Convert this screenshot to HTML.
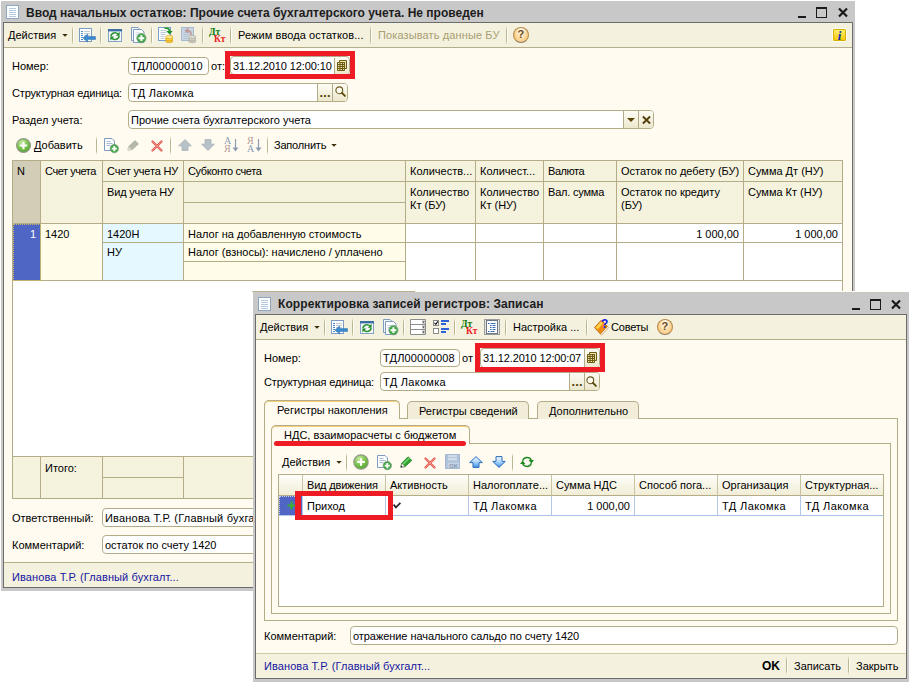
<!DOCTYPE html>
<html lang="ru">
<head>
<meta charset="utf-8">
<title>Ввод начальных остатков</title>
<style>
html,body{margin:0;padding:0;background:#fff}
body{width:909px;height:682px;position:relative;overflow:hidden;font-family:"Liberation Sans",sans-serif;font-size:11px;color:#000;line-height:13px}
.a{position:absolute;box-sizing:border-box;white-space:nowrap}
.frame{background:#c8c8c8}
.inner{background:#fffbf0;border:1px solid #6c6c6c}
.ttl{font-weight:bold;font-size:12px;color:#1c1c1c;line-height:14px}
.tb{background:#f4f1de;border-bottom:1px solid #b5ae8a}
.sep{width:2px;background:linear-gradient(rgba(190,182,142,0),#bdb58e 22%,#bdb58e 78%,rgba(190,182,142,0)) left/1px 100% no-repeat,linear-gradient(rgba(255,254,246,0),#fffef8 22%,#fffef8 78%,rgba(255,254,246,0)) right/1px 100% no-repeat}
.fld{background:#fff;border:1px solid #b3ac86;border-radius:4px;padding:2px 0 0 2px;height:18px;overflow:hidden}
.btn{background:#f6f3e0;border-left:1px solid #b3ac86;}
.th{background:#f5f2dd;border-right:1px solid #b3ac86;border-bottom:1px solid #b3ac86;padding:4px 0 0 4px;overflow:hidden;line-height:13px;white-space:normal}
.td{border-right:1px solid #b3ac86;border-bottom:1px solid #b3ac86;padding:3px 0 0 4px;overflow:hidden}
.num{text-align:right;padding:3px 4px 0 0}
.sb{background:#f4f1de}
.navy{color:#1515a2}
.gr{color:#a89e72}
.dt{font-family:"Liberation Serif",serif;font-weight:bold;font-size:9.500px;color:#0b7a0b;line-height:10px}
.kt{font-family:"Liberation Serif",serif;font-weight:bold;font-size:9.500px;color:#ee1c24;line-height:10px}
.help{width:15.500px;height:15.500px;border-radius:8px;border:1px solid #b58a4c;border-bottom-color:#8d7a66;background:radial-gradient(ellipse at 50% 22%,#fffaf0 0%,#fde6bc 38%,#f6b350 100%);font-weight:bold;font-size:11px;line-height:13.500px;text-align:center;color:#6e4a22}
.info{width:15px;height:14px;border:1px solid #fffdf2;border-radius:2px;background:linear-gradient(#fff27a,#f7c600);box-shadow:0 0 0 1px #d8b000 inset;font-family:"Liberation Serif",serif;font-style:italic;font-weight:bold;font-size:13px;line-height:13px;text-align:center;color:#1033b0}
.red{border:5px solid #ed1c24}
.dots{font-weight:bold;font-size:13px;color:#54420a;letter-spacing:.2px}
.srt{font-family:"Liberation Serif",serif;font-size:10px;line-height:10px}
.btn{background:linear-gradient(#fdfcf4,#ece8cd)}
.tabi{background:#f1edd8;border:1px solid #b3ac86;border-bottom:0;border-radius:5px 5px 0 0;padding:3px 0 0 11px}
.taba{background:#fffbf0;border:1px solid #b3ac86;border-bottom:0;border-radius:5px 5px 0 0;padding:3px 0 0 12px;box-shadow:0 1px 0 #f7cf7a inset}
.th2{background:linear-gradient(#fffefa,#f1edd6);border-right:1px solid #c9c3a3;border-bottom:1px solid #b3ac86;padding:4px 0 0 4px;overflow:hidden}
.td2{background:#fff;border-right:1px solid #b5c7e6;border-bottom:1px solid #a9c0e6;padding:4px 0 0 4px;overflow:hidden}
.td2.num{padding:4px 4px 0 0}
u{text-decoration-skip-ink:none;text-underline-offset:1.500px;text-decoration-thickness:1px}
svg{position:absolute;overflow:visible}
</style>
</head>
<body>

<!-- ================= WINDOW 1 ================= -->
<div class="a frame" style="left:1px;top:1px;width:854px;height:590px"></div>
<div class="a inner" style="left:3px;top:22px;width:850px;height:566px"></div>
<div class="a ttl" style="left:26px;top:6px">Ввод начальных остатков: Прочие счета бухгалтерского учета. Не проведен</div>

<!-- toolbar 1 -->
<div class="a tb" style="left:4px;top:23px;width:848px;height:25px"></div>
<svg style="left:6px;top:5px" width="13" height="14" viewBox="0 0 13 14"><rect x=".5" y=".5" width="12" height="13" fill="#fdfeff" stroke="#8fa5c4"/><path d="M3 3.5h7M3 5.5h7M3 7.5h7M3 9.5h7M3 11.5h7" stroke="#b7c9df" stroke-width="1"/></svg>
<div class="a" style="left:8px;top:29px">Действия</div>
<svg style="left:62px;top:34px" width="6" height="3" viewBox="0 0 6 3"><path d="M.3 0h5.400L3 2.800z" fill="#3a2c08"/></svg>
<div class="a sep" style="left:72px;top:26px;height:19px"></div>
<!-- icon: list with arrow -->
<svg style="left:79px;top:28px" width="17" height="15" viewBox="0 0 17 15"><rect x=".5" y=".5" width="12" height="13" fill="#fff" stroke="#7d9cc4"/><path d="M2 3.500h2M2 5.500h2M2 7.500h2M2 9.500h2M2 11.500h2" stroke="#4d8ac8"/><path d="M5 3.500h6M5 5.500h6M5 7.500h6M5 11.500h3" stroke="#c2ccd8"/><path d="M4 10l4.6-4v2.6H16.5v2.8H8.6V14z" fill="#3a8bd0" stroke="#2a6aa8" stroke-width=".5"/></svg>
<div class="a sep" style="left:100px;top:26px;height:19px"></div>
<!-- icon: refresh window -->
<svg style="left:108px;top:29px" width="14" height="13" viewBox="0 0 14 13"><rect x=".5" y=".5" width="13" height="12" fill="#f4f8fc" stroke="#86a3c6"/><rect x="0" y="0" width="14" height="2.4" fill="#3c6ea6"/><path d="M3 7.2a4 3.6 0 0 1 7-2.2" fill="none" stroke="#2f9632" stroke-width="1.6"/><path d="M11.6 2.8v4H7.8z" fill="#1f8a25"/><path d="M11 7a4 3.6 0 0 1-7 2.300" fill="none" stroke="#2f9632" stroke-width="1.6"/><path d="M2.400 11.400v-4H6.200z" fill="#1f8a25"/></svg>
<!-- icon: copy plus -->
<svg style="left:131px;top:27px" width="16" height="16" viewBox="0 0 16 16"><path d="M.5.5h6.500l2 2V13.500H.5z" fill="#f4f8fc" stroke="#7f9cc0"/><path d="M2.500 2.500h8l2.500 2.500V15.500H2.500z" fill="#fdfeff" stroke="#7f9cc0"/><path d="M4.500 6h5M4.500 8h4" stroke="#c5d2e0"/><circle cx="10.400" cy="11.200" r="4.600" fill="#3fa845" stroke="#7d9a7d" stroke-width=".8"/><path d="M10.400 8.300v5.800M7.500 11.200h5.800" stroke="#fff" stroke-width="2"/></svg>
<div class="a sep" style="left:151px;top:26px;height:19px"></div>
<!-- icon: post (doc + green arrow + coins) -->
<svg style="left:158px;top:27px" width="16" height="17" viewBox="0 0 16 17"><rect x=".5" y=".5" width="12" height="13" fill="#fbfdff" stroke="#78a0d0"/><path d="M2.500 3.500h6M2.500 5.500h6M2.500 7.500h5M2.500 9.500h4M2.500 11.500h4" stroke="#bccbdc"/><path d="M6.500 1.200c3.500-.5 5 .8 5 3" fill="none" stroke="#2c9a2c" stroke-width="1.800"/><path d="M8.300 4h6.400l-3.200 3.600z" fill="#1f8f22"/><ellipse cx="11.200" cy="14" rx="3.700" ry="1.700" fill="#f5c535" stroke="#d09a10" stroke-width=".6"/><ellipse cx="11.200" cy="12" rx="3.700" ry="1.700" fill="#fbd548" stroke="#d09a10" stroke-width=".6"/><ellipse cx="11.200" cy="10" rx="3.700" ry="1.700" fill="#ffea8a" stroke="#d09a10" stroke-width=".6"/></svg>
<!-- icon: unpost (gray) -->
<svg style="left:181px;top:27px" width="16" height="17" viewBox="0 0 16 17"><rect x=".5" y=".5" width="12" height="13" fill="#c9d6e3" stroke="#a9bace"/><path d="M2.500 5.500h6M2.500 7.500h5M2.500 9.500h4M2.500 11.500h4" stroke="#b4c4d6"/><path d="M9.800 8c.8-3-1-4.500-3.500-4.300" fill="none" stroke="#c29a98" stroke-width="1.800"/><path d="M7.400 .6v6.200L3.400 3.700z" fill="#c09896"/><ellipse cx="11.200" cy="14" rx="3.700" ry="1.700" fill="#c8c5ba" stroke="#a9a69b" stroke-width=".6"/><ellipse cx="11.200" cy="12" rx="3.700" ry="1.700" fill="#d2cfc4" stroke="#a9a69b" stroke-width=".6"/><ellipse cx="11.200" cy="10" rx="3.700" ry="1.700" fill="#dcd9cf" stroke="#a9a69b" stroke-width=".6"/></svg>
<div class="a sep" style="left:202px;top:26px;height:19px"></div>
<div class="a dt" style="left:209px;top:27px">Дт</div>
<div class="a kt" style="left:214px;top:34px">Кт</div>
<div class="a sep" style="left:230px;top:26px;height:19px"></div>
<div class="a" style="left:238px;top:29px;letter-spacing:.09px">Режим ввода остатков...</div>
<div class="a sep" style="left:370px;top:26px;height:19px"></div>
<div class="a gr" style="left:378px;top:29px;letter-spacing:.12px">Показывать данные БУ</div>
<div class="a sep" style="left:506px;top:26px;height:19px"></div>
<div class="a help" style="left:513px;top:27px">?</div>
<div class="a info" style="left:832px;top:28px">i</div>
<!-- window buttons 1 -->
<div class="a" style="left:798px;top:15.500px;width:8px;height:2.500px;background:#1a1a1a"></div>
<div class="a" style="left:816px;top:7px;width:11px;height:11px;border:1px solid #1a1a1a;border-top-width:2px"></div>
<svg style="left:838px;top:8px" width="10" height="9" viewBox="0 0 10 9"><path d="M1 .5l8 8M9 .5l-8 8" stroke="#1a1a1a" stroke-width="2.200"/></svg>

<!-- fields 1 -->
<div class="a" style="left:12px;top:60px">Номер:</div>
<div class="a fld" style="left:128px;top:57px;width:81px;letter-spacing:.17px">ТДЛ00000010</div>
<div class="a" style="left:211px;top:60px">от:</div>
<div class="a fld" style="left:230px;top:56px;width:120px;height:19px;padding-top:3px;letter-spacing:-.12px;padding-left:2px">31.12.2010 12:00:10</div>
<div class="a btn" style="left:334px;top:58px;width:15px;height:16px;border-radius:0 3px 3px 0"></div>
<svg style="left:337px;top:60px" width="10" height="11" viewBox="0 0 10 11"><path d="M2.500 .5h7v8h-2v2h-7v-8h2z" fill="#efe7b8" stroke="#6f5c10"/><path d="M.5 4.500h7M.5 6.500h7M.5 8.500h7M3 2.500v8M5.500 2.500v8M2.500 2.500h5v6" fill="none" stroke="#6f5c10" stroke-width="1.100"/></svg>
<div class="a red" style="left:225px;top:51px;width:130px;height:28px"></div>
<div class="a" style="left:12px;top:87px;letter-spacing:-.17px">Структурная единица:</div>
<div class="a fld" style="left:128px;top:83px;width:220px;height:19px;padding-top:3px;letter-spacing:.3px">ТД Лакомка</div>
<div class="a btn" style="left:317px;top:84px;width:15px;height:17px"></div>
<div class="a btn" style="left:332px;top:84px;width:15px;height:17px;border-radius:0 3px 3px 0"></div>
<div class="a dots" style="left:319.500px;top:86px">...</div>
<svg style="left:335px;top:86px" width="11" height="11" viewBox="0 0 11 11"><circle cx="4.300" cy="4.300" r="3.400" fill="#fffdf2" stroke="#66541a" stroke-width="1.100"/><path d="M6.900 6.900l3 3" stroke="#5c4a0c" stroke-width="1.900" stroke-linecap="round"/></svg>
<div class="a" style="left:12px;top:114px">Раздел учета:</div>
<div class="a fld" style="left:128px;top:110px;width:526px;height:19px;padding-top:3px">Прочие счета бухгалтерского учета</div>
<div class="a btn" style="left:623px;top:111px;width:15px;height:17px"></div>
<div class="a btn" style="left:638px;top:111px;width:15px;height:17px;border-radius:0 3px 3px 0"></div>
<svg style="left:627px;top:118px" width="8" height="4" viewBox="0 0 8 4"><path d="M0 0h8L4 4z" fill="#5a4408"/></svg>
<svg style="left:641.500px;top:115.500px" width="9" height="8" viewBox="0 0 9 8"><path d="M.9 .5l7.200 7M8.100 .5L.9 7.500" stroke="#54400a" stroke-width="1.900"/></svg>

<!-- table toolbar 1 -->
<svg style="left:16px;top:138px" width="15" height="15" viewBox="0 0 15 15"><defs><radialGradient id="gg" cx=".4" cy=".3" r=".8"><stop offset="0" stop-color="#cdeaa8"/><stop offset=".55" stop-color="#73c047"/><stop offset="1" stop-color="#4a9c2c"/></radialGradient></defs><circle cx="7.500" cy="7.500" r="6.900" fill="url(#gg)" stroke="#929a88" stroke-width="1.200"/><path d="M7.500 3.800v7.400M3.800 7.500h7.400" stroke="#fff" stroke-width="2"/></svg>
<div class="a" style="left:34px;top:139px"><u>Д</u>обавить</div>
<div class="a sep" style="left:96px;top:136px;height:19px"></div>
<svg style="left:104px;top:138px" width="15" height="15" viewBox="0 0 15 15"><path d="M.5.5h7.500l2.500 2.500V12.500H.5z" fill="#fdfeff" stroke="#7f9cc0"/><path d="M2.500 3.500h4M2.500 5.500h6M2.500 7.500h4" stroke="#a9bcd2"/><circle cx="10.300" cy="10.600" r="4.200" fill="#3fa845" stroke="#809c80" stroke-width=".8"/><path d="M10.300 8v5.200M7.700 10.600h5.200" stroke="#fff" stroke-width="1.800"/></svg>
<svg style="left:127px;top:140px" width="13" height="11" viewBox="0 0 13 11"><path d="M.8 10.200l.9-3.700L8 .6l3.500 3.300L5 9.700z" fill="#b4b9aa" stroke="#a0a596" stroke-width=".6"/><path d="M.8 10.200l.9-3.700 3.300 3.200z" fill="#dadace"/></svg>
<svg style="left:151px;top:140px" width="12" height="12" viewBox="0 0 12 12"><path d="M1.500 1.500l9 9M10.500 1.500l-9 9" stroke="#e2564c" stroke-width="2.300" stroke-linecap="round"/><path d="M1.500 1.500l9 9M10.500 1.500l-9 9" stroke="#f4988c" stroke-width=".9" stroke-linecap="round"/></svg>
<div class="a sep" style="left:170px;top:136px;height:19px"></div>
<svg style="left:178px;top:139px" width="14" height="12" viewBox="0 0 14 12"><path d="M7 .6L13.300 6.800H10V11.400H4V6.800H.7z" fill="#b7c2c8" stroke="#a4b0b8" stroke-width=".8"/></svg>
<svg style="left:201px;top:139px" width="14" height="12" viewBox="0 0 14 12"><path d="M7 11.400L13.300 5.200H10V.6H4V5.200H.7z" fill="#b7c2c8" stroke="#a4b0b8" stroke-width=".8"/></svg>
<div class="a srt" style="left:224px;top:136px;color:#8d9bb0">А</div>
<div class="a srt" style="left:224px;top:144px;color:#b69a9a">Я</div>
<svg style="left:232px;top:139px" width="7" height="13" viewBox="0 0 7 13"><path d="M3.500 0v10" stroke="#8d9bb0" stroke-width="1.200"/><path d="M.5 8.500h6L3.500 12.500z" fill="#8d9bb0"/></svg>
<div class="a srt" style="left:247px;top:136px;color:#b69a9a">Я</div>
<div class="a srt" style="left:247px;top:144px;color:#8d9bb0">А</div>
<svg style="left:255px;top:139px" width="7" height="13" viewBox="0 0 7 13"><path d="M3.500 0v10" stroke="#8d9bb0" stroke-width="1.200"/><path d="M.5 8.500h6L3.500 12.500z" fill="#8d9bb0"/></svg>
<div class="a sep" style="left:267px;top:136px;height:19px"></div>
<div class="a" style="left:274px;top:139px;letter-spacing:-.2px">Заполнить</div>
<svg style="left:331px;top:144px" width="6" height="3" viewBox="0 0 6 3"><path d="M.3 0h5.400L3 2.800z" fill="#3a2c08"/></svg>

<!-- table 1 -->
<div class="a" style="left:12px;top:160px;width:831px;height:339px;background:#fff;border:1px solid #b3ac86"></div>
<div class="a th" style="left:13px;top:161px;width:28px;height:63px;padding-top:4px;background:#d1cdb6">N</div>
<div class="a th" style="left:41px;top:161px;width:62px;height:63px;padding-top:4px;letter-spacing:-.44px">Счет учета</div>
<div class="a th" style="left:103px;top:161px;width:81px;height:21px;padding-top:4px;letter-spacing:-.18px">Счет учета НУ</div>
<div class="a th" style="left:103px;top:182px;width:81px;height:42px;letter-spacing:-.17px">Вид учета НУ</div>
<div class="a th" style="left:184px;top:161px;width:222px;height:21px;padding-top:4px;letter-spacing:-.4px">Субконто счета</div>
<div class="a th" style="left:184px;top:182px;width:222px;height:21px"></div>
<div class="a th" style="left:184px;top:203px;width:222px;height:21px"></div>
<div class="a th" style="left:406px;top:161px;width:70px;height:21px;padding-top:4px">Количеств...</div>
<div class="a th" style="left:406px;top:182px;width:70px;height:42px">Количество Кт (БУ)</div>
<div class="a th" style="left:476px;top:161px;width:68px;height:21px;padding-top:4px">Количест...</div>
<div class="a th" style="left:476px;top:182px;width:68px;height:42px">Количество Кт (НУ)</div>
<div class="a th" style="left:544px;top:161px;width:73px;height:21px;padding-top:4px;letter-spacing:-.45px">Валюта</div>
<div class="a th" style="left:544px;top:182px;width:73px;height:42px;letter-spacing:-.2px">Вал. сумма</div>
<div class="a th" style="left:617px;top:161px;width:127px;height:21px;padding-top:4px">Остаток по дебету (БУ)</div>
<div class="a th" style="left:617px;top:182px;width:127px;height:42px">Остаток по кредиту (БУ)</div>
<div class="a th" style="left:744px;top:161px;width:98px;height:21px;padding-top:4px;border-right:0">Сумма Дт (НУ)</div>
<div class="a th" style="left:744px;top:182px;width:98px;height:42px;border-right:0">Сумма Кт (НУ)</div>
<!-- data row -->
<div class="a td" style="left:13px;top:224px;width:28px;height:57px;padding-top:4px;background:#4f66c4;color:#fff;text-align:right;padding-right:4px;outline:1px dotted #cdb95a;outline-offset:-1px">1</div>
<div class="a td" style="left:41px;top:224px;width:62px;height:57px;padding-top:4px;background:#fffce9">1420</div>
<div class="a td" style="left:103px;top:224px;width:81px;height:19px;padding-top:4px;background:#e6f8ff">1420Н</div>
<div class="a td" style="left:103px;top:243px;width:81px;height:38px;background:#e6f8ff">НУ</div>
<div class="a td" style="left:184px;top:224px;width:222px;height:19px;padding-top:4px;background:#fffde9">Налог на добавленную стоимость</div>
<div class="a td" style="left:184px;top:243px;width:222px;height:19px;background:#fffde9">Налог (взносы): начислено / уплачено</div>
<div class="a td" style="left:184px;top:262px;width:222px;height:19px;background:#fffde9"></div>
<div class="a td" style="left:406px;top:224px;width:70px;height:19px;padding-top:4px"></div>
<div class="a td" style="left:406px;top:243px;width:70px;height:38px"></div>
<div class="a td" style="left:476px;top:224px;width:68px;height:19px;padding-top:4px"></div>
<div class="a td" style="left:476px;top:243px;width:68px;height:38px"></div>
<div class="a td" style="left:544px;top:224px;width:73px;height:19px;padding-top:4px"></div>
<div class="a td" style="left:544px;top:243px;width:73px;height:38px"></div>
<div class="a td num" style="left:617px;top:224px;width:127px;height:19px;padding-top:4px">1 000,00</div>
<div class="a td" style="left:617px;top:243px;width:127px;height:38px"></div>
<div class="a td num" style="left:744px;top:224px;width:98px;height:19px;padding-top:4px;border-right:0">1 000,00</div>
<div class="a td" style="left:744px;top:243px;width:98px;height:38px;border-right:0"></div>
<!-- footer -->
<div class="a th" style="left:13px;top:456px;width:28px;height:42px;border-top:1px solid #b3ac86;border-bottom:0"></div>
<div class="a th" style="left:41px;top:456px;width:62px;height:42px;border-top:1px solid #b3ac86;border-bottom:0;padding-top:5px">Итого:</div>
<div class="a th" style="left:103px;top:456px;width:81px;height:22px;border-top:1px solid #b3ac86"></div>
<div class="a th" style="left:103px;top:478px;width:81px;height:20px;border-bottom:0"></div>
<div class="a th" style="left:184px;top:456px;width:222px;height:42px;border-top:1px solid #b3ac86;border-bottom:0"></div>
<div class="a th" style="left:406px;top:456px;width:70px;height:42px;border-top:1px solid #b3ac86;border-bottom:0"></div>
<div class="a th" style="left:476px;top:456px;width:68px;height:42px;border-top:1px solid #b3ac86;border-bottom:0"></div>
<div class="a th" style="left:544px;top:456px;width:73px;height:42px;border-top:1px solid #b3ac86;border-bottom:0"></div>
<div class="a th" style="left:617px;top:456px;width:127px;height:42px;border-top:1px solid #b3ac86;border-bottom:0"></div>
<div class="a th" style="left:744px;top:456px;width:98px;height:42px;border-top:1px solid #b3ac86;border-bottom:0;border-right:0"></div>

<!-- bottom fields 1 -->
<div class="a" style="left:12px;top:512px">Ответственный:</div>
<div class="a fld" style="left:102px;top:508px;width:400px;height:19px;padding-top:3px;letter-spacing:.2px">Иванова Т.Р. (Главный бухгалтер)</div>
<div class="a" style="left:12px;top:539px">Комментарий:</div>
<div class="a fld" style="left:102px;top:535px;width:400px;height:19px;padding-top:3px">остаток по счету 1420</div>

<!-- status bar 1 -->
<div class="a sb" style="left:4px;top:562px;width:848px;height:25px;border-top:1px solid #b5ae8a"></div>
<div class="a navy" style="left:12px;top:571px;letter-spacing:.1px">Иванова Т.Р. (Главный бухгалт...</div>

<!-- ================= WINDOW 2 ================= -->
<div class="a" style="left:252px;top:291px;width:657px;height:1px;background:#fffbf0"></div>
<div class="a" style="left:252px;top:291px;width:163px;height:1px;background:#b9b28e"></div>
<div class="a frame" style="left:253px;top:292px;width:656px;height:390px"></div>
<div class="a inner" style="left:255px;top:314px;width:652px;height:365px"></div>
<svg style="left:258px;top:297px" width="13" height="14" viewBox="0 0 13 14"><rect x=".5" y=".5" width="12" height="13" fill="#fdfeff" stroke="#8fa5c4"/><path d="M3 3.500h7M3 5.500h7M3 7.500h7M3 9.500h7M3 11.500h7" stroke="#b7c9df" stroke-width="1"/></svg>
<div class="a ttl" style="left:278px;top:297px;letter-spacing:.08px">Корректировка записей регистров: Записан</div>
<div class="a" style="left:852px;top:307.500px;width:8px;height:2.500px;background:#1a1a1a"></div>
<div class="a" style="left:870px;top:299px;width:11px;height:11px;border:1px solid #1a1a1a;border-top-width:2px"></div>
<svg style="left:891px;top:300px" width="10" height="9" viewBox="0 0 10 9"><path d="M1 .5l8 8M9 .5l-8 8" stroke="#1a1a1a" stroke-width="2.200"/></svg>

<!-- toolbar 2 -->
<div class="a tb" style="left:256px;top:315px;width:650px;height:25px"></div>
<div class="a" style="left:260px;top:321px">Действия</div>
<svg style="left:314px;top:326px" width="6" height="3" viewBox="0 0 6 3"><path d="M.3 0h5.400L3 2.800z" fill="#3a2c08"/></svg>
<div class="a sep" style="left:324px;top:318px;height:19px"></div>
<svg style="left:331px;top:320px" width="17" height="15" viewBox="0 0 17 15"><rect x=".5" y=".5" width="12" height="13" fill="#fff" stroke="#7d9cc4"/><path d="M2 3.500h2M2 5.500h2M2 7.500h2M2 9.500h2M2 11.500h2" stroke="#4d8ac8"/><path d="M5 3.500h6M5 5.500h6M5 7.500h6M5 11.500h3" stroke="#c2ccd8"/><path d="M4 10l4.600-4v2.600H16.500v2.800H8.600V14z" fill="#3a8bd0" stroke="#2a6aa8" stroke-width=".5"/></svg>
<div class="a sep" style="left:352px;top:318px;height:19px"></div>
<svg style="left:360px;top:321px" width="14" height="13" viewBox="0 0 14 13"><rect x=".5" y=".5" width="13" height="12" fill="#f4f8fc" stroke="#86a3c6"/><rect x="0" y="0" width="14" height="2.400" fill="#3c6ea6"/><path d="M3 7.200a4 3.600 0 0 1 7-2.200" fill="none" stroke="#2f9632" stroke-width="1.600"/><path d="M11.600 2.800v4H7.800z" fill="#1f8a25"/><path d="M11 7a4 3.600 0 0 1-7 2.300" fill="none" stroke="#2f9632" stroke-width="1.600"/><path d="M2.400 11.400v-4H6.200z" fill="#1f8a25"/></svg>
<svg style="left:383px;top:319px" width="16" height="16" viewBox="0 0 16 16"><path d="M.5.500h6.500l2 2V13.500H.5z" fill="#f4f8fc" stroke="#7f9cc0"/><path d="M2.500 2.500h8l2.500 2.500V15.500H2.500z" fill="#fdfeff" stroke="#7f9cc0"/><path d="M4.500 6.500h5M4.500 8.500h4" stroke="#c5d2e0"/><circle cx="10.400" cy="11.200" r="4.600" fill="#3fa845" stroke="#7d9a7d" stroke-width=".8"/><path d="M10.400 8.300v5.800M7.500 11.200h5.800" stroke="#fff" stroke-width="2"/></svg>
<div class="a sep" style="left:403px;top:318px;height:19px"></div>
<!-- icon: stacked combos -->
<svg style="left:410px;top:319px" width="16" height="16" viewBox="0 0 16 16"><path d="M.5.500h15v15H.5zM.5 5.500h15M.5 10.500h15" fill="#fff" stroke="#8c8c8c"/><path d="M12 0v16" stroke="#8c8c8c" stroke-width="0"/><rect x="12" y="1" width="3" height="4" fill="#d8d8d8"/><rect x="12" y="6" width="3" height="4" fill="#d8d8d8"/><rect x="12" y="11" width="3" height="4" fill="#d8d8d8"/><path d="M12.300 2.500h2.400l-1.200 1.500zM12.300 7.500h2.400l-1.200 1.500zM12.300 12.500h2.400l-1.200 1.500z" fill="#222"/></svg>
<!-- icon: checkboxes + bars -->
<svg style="left:433px;top:320px" width="16" height="15" viewBox="0 0 16 15"><rect x=".5" y=".5" width="5" height="5" fill="#fff" stroke="#8a8a8a"/><path d="M1.500 2.800l1.300 1.500L4.800 1.400" fill="none" stroke="#111" stroke-width="1.100"/><rect x=".5" y="8.500" width="5" height="5" fill="#fff" stroke="#8a8a8a"/><path d="M8 1h8M8 4h5M8 9h8M8 12h5" stroke="#2a62d8" stroke-width="2"/></svg>
<div class="a sep" style="left:454px;top:318px;height:19px"></div>
<div class="a dt" style="left:461px;top:319px">Дт</div>
<div class="a kt" style="left:466px;top:326px">Кт</div>
<!-- icon: tree doc pressed -->
<svg style="left:484px;top:319px" width="16" height="16" viewBox="0 0 16 16"><rect x=".5" y=".5" width="15" height="15" fill="#e4e4e0" stroke="#9c9c9c"/><rect x="2.500" y="1.500" width="11" height="13" fill="#fff" stroke="#6a7888"/><path d="M4 4.500h1.500M6 6.500h1.500M6 8.500h1.500M6 10.500h1.500M4 12.500h1.500" stroke="#2a5fc0" stroke-width="1.200"/><path d="M6.500 4.500h5M8.500 6.500h3M8.500 8.500h3M8.500 10.500h3M6.500 12.500h4" stroke="#3a6fb0" stroke-width="1"/></svg>
<div class="a sep" style="left:505px;top:318px;height:19px"></div>
<div class="a" style="left:513px;top:321px">Настройка ...</div>
<div class="a sep" style="left:586px;top:318px;height:19px"></div>
<!-- icon: advice book -->
<svg style="left:594px;top:318px" width="15" height="17" viewBox="0 0 15 17"><path d="M.5 9.500L7.500 2l6 6.500L6.500 16z" fill="#f08a10" stroke="#b45a00" stroke-width=".8"/><path d="M1.500 9.500L7 3.500l2 2L3.500 11.500z" fill="#ffd24a"/><path d="M6.500 16l7-7.500 1 1.200-7 7.500z" fill="#fff" stroke="#b45a00" stroke-width=".5"/><text x="7" y="9.500" font-family="Liberation Sans, sans-serif" font-weight="bold" font-size="12" fill="#1020e0">?</text></svg>
<div class="a" style="left:611px;top:321px;letter-spacing:-.2px">Советы</div>
<div class="a help" style="left:657px;top:319px">?</div>

<!-- fields 2 -->
<div class="a" style="left:264px;top:352px">Номер:</div>
<div class="a fld" style="left:380px;top:349px;width:80px;letter-spacing:.17px">ТДЛ00000008</div>
<div class="a" style="left:462px;top:352px">от</div>
<div class="a fld" style="left:480px;top:348px;width:120px;height:20px;padding-top:3px;letter-spacing:-.15px;padding-left:2px">31.12.2010 12:00:07</div>
<div class="a btn" style="left:584px;top:349px;width:15px;height:18px;border-radius:0 3px 3px 0"></div>
<svg style="left:587px;top:352px" width="10" height="11" viewBox="0 0 10 11"><path d="M2.500 .5h7v8h-2v2h-7v-8h2z" fill="#efe7b8" stroke="#6f5c10"/><path d="M.5 4.500h7M.5 6.500h7M.5 8.500h7M3 2.500v8M5.500 2.500v8M2.500 2.500h5v6" fill="none" stroke="#6f5c10" stroke-width="1.100"/></svg>
<div class="a red" style="left:475px;top:343px;width:130px;height:29px"></div>
<div class="a" style="left:264px;top:376px;letter-spacing:-.17px">Структурная единица:</div>
<div class="a fld" style="left:380px;top:372px;width:220px;height:19px;padding-top:3px;letter-spacing:.3px">ТД Лакомка</div>
<div class="a btn" style="left:569px;top:373px;width:15px;height:17px"></div>
<div class="a btn" style="left:584px;top:373px;width:15px;height:17px;border-radius:0 3px 3px 0"></div>
<div class="a dots" style="left:571.500px;top:375px">...</div>
<svg style="left:586px;top:376px" width="11" height="11" viewBox="0 0 11 11"><circle cx="4.300" cy="4.300" r="3.400" fill="#fffdf2" stroke="#66541a" stroke-width="1.100"/><path d="M6.900 6.900l3 3" stroke="#5c4a0c" stroke-width="1.900" stroke-linecap="round"/></svg>

<!-- tabs -->
<div class="a" style="left:264px;top:418px;width:634px;height:203px;border:1px solid #b3ac86"></div>
<div class="a tabi" style="left:407px;top:401px;width:122px;height:18px">Регистры сведений</div>
<div class="a tabi" style="left:537px;top:401px;width:102px;height:18px">Дополнительно</div>
<div class="a taba" style="left:264px;top:400px;width:136px;height:19px">Регистры накопления</div>
<div class="a" style="left:271px;top:443px;width:620px;height:171px;border:1px solid #b3ac86"></div>
<div class="a taba" style="left:271px;top:425px;width:199px;height:19px">НДС, взаиморасчеты с бюджетом</div>
<div class="a" style="left:274px;top:441px;width:192px;height:5px;border-radius:2.500px;background:#ed1c24"></div>

<!-- inner toolbar -->
<div class="a" style="left:282px;top:456px">Действия</div>
<svg style="left:336px;top:461px" width="6" height="3" viewBox="0 0 6 3"><path d="M.3 0h5.400L3 2.800z" fill="#3a2c08"/></svg>
<div class="a sep" style="left:346px;top:453px;height:19px"></div>
<svg style="left:353px;top:454px" width="16" height="16" viewBox="0 0 16 16"><circle cx="8" cy="8" r="7.200" fill="url(#gg)" stroke="#929a88" stroke-width="1.200"/><path d="M8 4.200v7.600M4.200 8h7.600" stroke="#fff" stroke-width="2"/></svg>
<svg style="left:377px;top:455px" width="15" height="15" viewBox="0 0 15 15"><path d="M.5.500h7.500l2.500 2.500V12.500H.5z" fill="#fdfeff" stroke="#7f9cc0"/><path d="M2.500 3.500h4M2.500 5.500h6M2.500 7.500h4" stroke="#a9bcd2"/><circle cx="10.300" cy="10.600" r="4.200" fill="#3fa845" stroke="#809c80" stroke-width=".8"/><path d="M10.300 8v5.200M7.700 10.600h5.200" stroke="#fff" stroke-width="1.800"/></svg>
<svg style="left:400px;top:456px" width="13" height="12" viewBox="0 0 13 12"><path d="M.8 11.200l.9-4L8 .8l3.800 3.600L5.200 10.600z" fill="#2fa52f" stroke="#157815" stroke-width=".7"/><path d="M.8 11.200l.9-4 3.500 3.400z" fill="#f6f6ee" stroke="#444" stroke-width=".4"/><path d="M.8 11.200l.4-1.600 1.400 1.300z" fill="#222"/><path d="M3.200 8.200L9 2.400" stroke="#86dd86" stroke-width="1.200"/></svg>
<svg style="left:424px;top:457px" width="12" height="12" viewBox="0 0 12 12"><path d="M1.500 1.500l9 9M10.500 1.500l-9 9" stroke="#e2564c" stroke-width="2.300" stroke-linecap="round"/><path d="M1.500 1.500l9 9M10.500 1.500l-9 9" stroke="#f4988c" stroke-width=".9" stroke-linecap="round"/></svg>
<svg style="left:445px;top:454px" width="15" height="15" viewBox="0 0 15 15"><path d="M.5.500h14v14H.5z" fill="#adc1d9" stroke="#a3b8d0"/><rect x="3" y="1" width="9" height="5.500" fill="#d0dcea"/><rect x="3" y="3" width="9" height="1" fill="#b4c6dc"/><rect x="2.500" y="8.500" width="11.500" height="5.500" fill="#c6d3e3"/><text x="4" y="13.600" font-family="Liberation Sans, sans-serif" font-weight="bold" font-size="6" fill="#8398b2">OK</text></svg>
<svg style="left:469px;top:456px" width="14" height="12" viewBox="0 0 14 12"><defs><linearGradient id="bg1" x1="0" y1="0" x2="0" y2="1"><stop offset="0" stop-color="#f4faff"/><stop offset=".45" stop-color="#b4daff"/><stop offset="1" stop-color="#3f92e4"/></linearGradient></defs><path d="M7 .6L13.300 6.600H10V11.400H4V6.600H.7z" fill="url(#bg1)" stroke="#2a6cba" stroke-width="1"/></svg>
<svg style="left:492px;top:456px" width="14" height="12" viewBox="0 0 14 12"><path d="M7 11.400L13.300 5.400H10V.6H4V5.400H.7z" fill="url(#bg1)" stroke="#2a6cba" stroke-width="1"/></svg>
<div class="a sep" style="left:512px;top:453px;height:19px"></div>
<svg style="left:520px;top:456px" width="14" height="12" viewBox="0 0 14 12"><path d="M2.600 4.800A4.700 4.700 0 0 1 11.400 4.400" fill="none" stroke="#1f8a25" stroke-width="1.400"/><path d="M8.600 4h5.400L11.400 7.600z" fill="#1f8a25"/><path d="M11.400 7.200A4.700 4.700 0 0 1 2.600 7.600" fill="none" stroke="#1f8a25" stroke-width="1.400"/><path d="M0 8h5.400L2.600 4.400z" fill="#1f8a25"/></svg>

<!-- table 2 -->
<div class="a" style="left:278px;top:474px;width:606px;height:133px;background:#fff;border:1px solid #b3ac86"></div>
<div class="a th2" style="left:279px;top:475px;width:24px;height:21px"></div>
<div class="a th2" style="left:303px;top:475px;width:83px;height:21px;letter-spacing:-.18px">Вид движения</div>
<div class="a th2" style="left:386px;top:475px;width:83px;height:21px">Активность</div>
<div class="a th2" style="left:469px;top:475px;width:83px;height:21px">Налогоплате...</div>
<div class="a th2" style="left:552px;top:475px;width:83px;height:21px">Сумма НДС</div>
<div class="a th2" style="left:635px;top:475px;width:83px;height:21px">Способ пога...</div>
<div class="a th2" style="left:718px;top:475px;width:83px;height:21px">Организация</div>
<div class="a th2" style="left:801px;top:475px;width:82px;height:21px;border-right:0">Структурная...</div>
<div class="a td2" style="left:279px;top:496px;width:24px;height:20px;background:#4f66c4;outline:1px dotted #c8d0f0;outline-offset:-1px"></div>
<svg style="left:287px;top:501px" width="9" height="9" viewBox="0 0 9 9"><path d="M4.500 .5v8M.5 4.500h8" stroke="#38b030" stroke-width="2"/></svg>
<div class="a td2" style="left:303px;top:496px;width:83px;height:20px">Приход</div>
<div class="a td2" style="left:386px;top:496px;width:83px;height:20px"></div>
<svg style="left:392.500px;top:502px" width="8" height="7" viewBox="0 0 8 7"><path d="M.6 2.600l2.300 2.800L7.400 .8" fill="none" stroke="#2a2a2a" stroke-width="1.700"/></svg>
<div class="a td2" style="left:469px;top:496px;width:83px;height:20px;letter-spacing:.4px">ТД Лакомка</div>
<div class="a td2 num" style="left:552px;top:496px;width:83px;height:20px">1 000,00</div>
<div class="a td2" style="left:635px;top:496px;width:83px;height:20px"></div>
<div class="a td2" style="left:718px;top:496px;width:83px;height:20px;letter-spacing:.4px">ТД Лакомка</div>
<div class="a td2" style="left:801px;top:496px;width:82px;height:20px;border-right:0;letter-spacing:.4px">ТД Лакомка</div>
<div class="a" style="left:295px;top:491px;width:98px;height:29px;border:5px solid #ed1c24;border-left-width:6px"></div>

<!-- bottom 2 -->
<div class="a" style="left:264px;top:630px">Комментарий:</div>
<div class="a fld" style="left:350px;top:626px;width:548px;height:19px;padding-top:3px;letter-spacing:-.06px">отражение начального сальдо по счету 1420</div>
<div class="a sb" style="left:256px;top:653px;width:650px;height:25px;border-top:1px solid #d2cba8"></div>
<div class="a navy" style="left:264px;top:660px;letter-spacing:.08px">Иванова Т.Р. (Главный бухгалт...</div>
<div class="a" style="left:762px;top:660px;font-weight:bold;font-size:12px">OK</div>
<div class="a sep" style="left:786px;top:656px;height:19px"></div>
<div class="a" style="left:794px;top:660px">Записать</div>
<div class="a sep" style="left:848px;top:656px;height:19px"></div>
<div class="a" style="left:856px;top:660px">Закрыть</div>

</body>
</html>
